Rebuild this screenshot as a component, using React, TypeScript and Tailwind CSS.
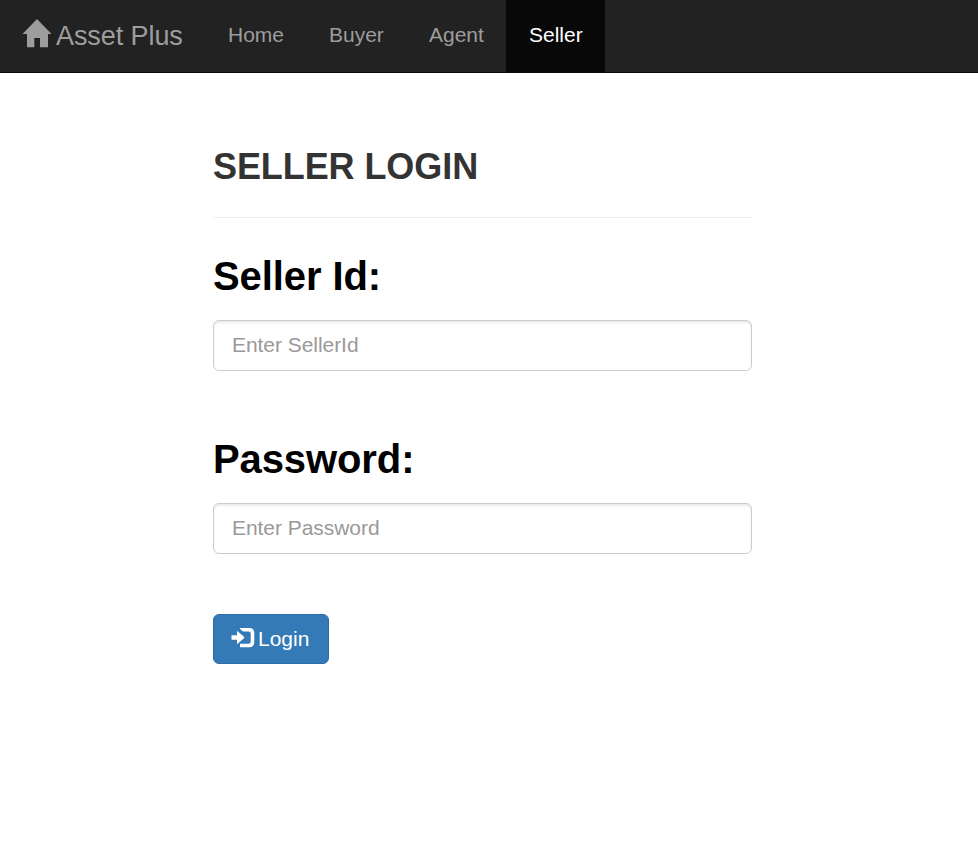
export default function App() {
  const nav = "block h-[72px] pt-[20px] text-[21px] leading-[30px]";
  const label = "block text-[40px] font-bold leading-[44px] text-black";
  const field =
    "mt-[22px] block h-[51px] w-full rounded-[6px] border border-[#cccccc] px-[18px] pb-[2px] text-[21px] tracking-[-0.05px] shadow-[inset_0_2px_2px_rgba(0,0,0,0.075)] placeholder:text-[#999999]";
  return (
    <div className="min-h-[847px] w-full bg-white font-['Liberation_Sans',Arial,sans-serif] text-[21px]">
      <nav className="flex h-[73px] border-b border-[#080808] bg-[#222222] text-[#9d9d9d]">
        <a className="flex w-[205px] pl-[23px] pt-[19px]">
          <svg className="overflow-visible" width="28" height="28" viewBox="0 0 28 28" fill="currentColor">
            <path d="M14 0 28.5 15H25V28.3H17V19H11.3V28.3H4V15H-.5Z" />
          </svg>
          <span className="ml-[5px] mt-[2px] text-[27px] leading-[30px] tracking-[-0.08px]">Asset Plus</span>
        </a>
        <a className={`${nav} w-[101px] pl-[23px]`}>Home</a>
        <a className={`${nav} w-[100px] pl-[23px]`}>Buyer</a>
        <a className={`${nav} w-[100px] pl-[23px]`}>Agent</a>
        <a className={`${nav} w-[99px] bg-[#080808] pl-[23px] text-white`}>Seller</a>
      </nav>
      <main className="ml-[213px] w-[539px] pt-[74px]">
        <h1 className="h-[71px] border-b border-[#eeeeee] text-[36px] font-bold leading-[40px] tracking-[-0.08px] text-[#333333]">SELLER LOGIN</h1>
        <label className={`${label} mt-[36px] tracking-[-0.1px]`}>Seller Id:</label>
        <input className={field} placeholder="Enter SellerId" />
        <label className={`${label} mt-[66px] tracking-[-0.1px]`}>Password:</label>
        <input type="password" className={field} placeholder="Enter Password" />
        <button className="mt-[60px] flex h-[50px] w-[116px] items-center rounded-[6px] border border-[#2e6da4] bg-[#337ab7] pl-[17px] text-white">
          <svg className="-mt-[3px] overflow-visible" width="23" height="19" viewBox="0 0 23 19" fill="currentColor">
            <path d="M0.5 7.2H6V3.5Q6 2.8 6.8 3.4L13 8.8Q13.7 9.5 13 10.2L6.8 15.6Q6 16.2 6 15.5V11.8H0.5Z" />
            <path d="M9 0H18Q23.3 0 23.3 5V14.2Q23.3 19.2 18 19.2H9V15.8H17.5Q19.7 15.8 19.7 13.8V5.4Q19.7 3.4 17.5 3.4H12L9 1Z" />
          </svg>
          <span className="ml-[4px]">Login</span>
        </button>
      </main>
    </div>
  );
}
